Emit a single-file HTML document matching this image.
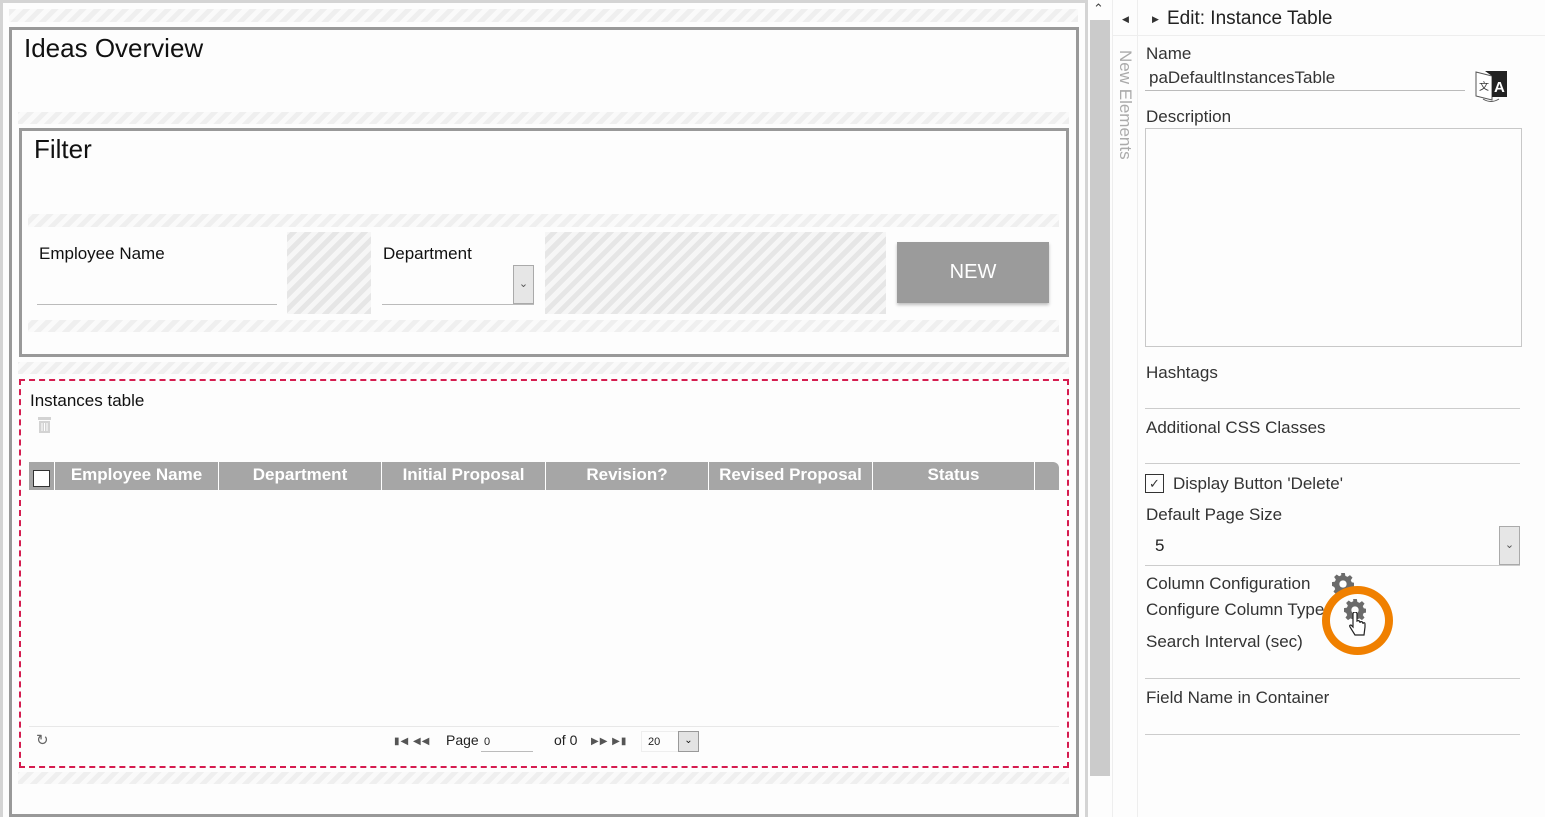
<!DOCTYPE html>
<html><head><meta charset="utf-8"><style>
*{margin:0;padding:0;box-sizing:border-box}
body{width:1545px;height:817px;overflow:hidden;background:#fdfdfd;font-family:"Liberation Sans",Roboto,sans-serif;position:relative;color:#111}
.a{position:absolute}
.st{position:absolute;background:repeating-linear-gradient(-45deg,#efefef 0 5px,#fafafa 5px 10px)}
.sd{position:absolute;background:repeating-linear-gradient(-45deg,#e6e6e6 0 5px,#f6f6f6 5px 10px)}
.lbl{position:absolute;font-size:17px;color:#333;white-space:nowrap}
.ul{position:absolute;height:1px;background:#bbb}
.th{position:absolute;top:462px;height:28px;color:#fff;font-weight:bold;font-size:17px;text-align:center;line-height:26px;border-right:1px solid #fff}
</style></head><body>
<svg width="0" height="0" style="position:absolute"><defs><g id="gear"><path d="M10 0h4l.6 3.2 2.3 1 2.7-1.9 2.8 2.8-1.9 2.7 1 2.3 3.2.6v4l-3.2.6-1 2.3 1.9 2.7-2.8 2.8-2.7-1.9-2.3 1-.6 3.2h-4l-.6-3.2-2.3-1-2.7 1.9-2.8-2.8 1.9-2.7-1-2.3L0 14v-4l3.2-.6 1-2.3-1.9-2.7 2.8-2.8 2.7 1.9 2.3-1z" fill="#6b6b6b"/><circle cx="12" cy="12" r="4" fill="#fff"/></g></defs></svg>
<div class="a" style="left:0;top:0;width:1088px;height:3px;background:#d4d4d4"></div>
<div class="a" style="left:0;top:0;width:3px;height:817px;background:#d4d4d4"></div>
<div class="a" style="left:1085px;top:0;width:3px;height:817px;background:#d4d4d4"></div>
<div class="st" style="left:9px;top:9px;width:1069px;height:13px"></div>
<div class="a" style="left:9px;top:27px;width:1070px;height:790px;border:3px solid #999"></div>
<div class="a" style="left:24px;top:33px;font-size:26px">Ideas Overview</div>
<div class="st" style="left:18px;top:112px;width:1051px;height:12px"></div>
<div class="a" style="left:19px;top:128px;width:1050px;height:229px;border:3px solid #999"></div>
<div class="a" style="left:34px;top:134px;font-size:26px">Filter</div>
<div class="st" style="left:28px;top:214px;width:1031px;height:13px"></div>
<div class="a" style="left:39px;top:244px;font-size:17px">Employee Name</div>
<div class="ul" style="left:37px;top:304px;width:240px"></div>
<div class="sd" style="left:287px;top:232px;width:84px;height:82px"></div>
<div class="a" style="left:383px;top:244px;font-size:17px">Department</div>
<div class="ul" style="left:382px;top:304px;width:152px"></div>
<div class="a" style="left:513px;top:265px;width:21px;height:39px;background:#e6e6e6;border:1px solid #aaa;font-size:11px;text-align:center;line-height:36px;color:#555">&#8964;</div>
<div class="sd" style="left:545px;top:232px;width:341px;height:82px"></div>
<div class="a" style="left:897px;top:242px;width:152px;height:61px;background:#9b9b9b;color:#fff;font-size:20px;text-align:center;line-height:61px;box-shadow:0 2px 3px rgba(0,0,0,.25)">NEW</div>
<div class="st" style="left:28px;top:320px;width:1031px;height:12px"></div>
<div class="st" style="left:18px;top:362px;width:1051px;height:12px"></div>
<div class="a" style="left:19px;top:379px;width:1050px;height:389px;border:2px dashed #d51c4f"></div>
<div class="a" style="left:30px;top:391px;font-size:17px">Instances table</div>
<svg class="a" style="left:36px;top:416px" width="17" height="18" viewBox="0 0 17 18"><rect x="2" y="1" width="13" height="3" fill="#d3d3d3"/><rect x="3" y="5" width="11" height="12" fill="#d3d3d3"/><path d="M6 7v8M8.5 7v8M11 7v8" stroke="#fff"/></svg>
<div class="a" style="left:29px;top:462px;width:1030px;height:28px;background:#a6a6a6;border-top-right-radius:6px"></div>
<div class="a" style="left:33px;top:470px;width:17px;height:17px;background:#fff;border:1px solid #333"></div>
<div class="a" style="left:54px;top:462px;width:1px;height:28px;background:#fff"></div>
<div class="th" style="left:55px;width:164px">Employee Name</div>
<div class="th" style="left:219px;width:163px">Department</div>
<div class="th" style="left:382px;width:164px">Initial Proposal</div>
<div class="th" style="left:546px;width:163px">Revision?</div>
<div class="th" style="left:709px;width:164px">Revised Proposal</div>
<div class="th" style="left:873px;width:162px">Status</div>
<div class="a" style="left:29px;top:726px;width:1030px;height:1px;background:#e8e8e8"></div>
<div class="a" style="left:36px;top:731px;font-size:15px;color:#666">&#x21BB;</div>
<div class="a" style="left:394px;top:736px;font-size:10px;color:#555;letter-spacing:1px">&#9646;&#9664; &#9664;&#9664;</div>
<div class="a" style="left:446px;top:732px;font-size:14px;color:#222">Page</div>
<div class="a" style="left:484px;top:736px;font-size:11px;color:#222">0</div>
<div class="ul" style="left:481px;top:751px;width:52px"></div>
<div class="a" style="left:554px;top:732px;font-size:14px;color:#222">of 0</div>
<div class="a" style="left:591px;top:736px;font-size:10px;color:#555;letter-spacing:1px">&#9654;&#9654; &#9654;&#9646;</div>
<div class="a" style="left:641px;top:731px;width:58px;height:21px;border:1px solid #eee;font-size:11px;color:#222;padding:4px 6px">20</div>
<div class="a" style="left:678px;top:731px;width:21px;height:21px;background:#e3e3e3;border:1px solid #999;font-size:10px;text-align:center;line-height:17px">&#8964;</div>
<div class="st" style="left:18px;top:772px;width:1051px;height:12px"></div>
<div class="a" style="left:1090px;top:20px;width:20px;height:756px;background:#cbcbcb"></div>
<div class="a" style="left:1093px;top:1px;font-size:13px;color:#444">&#8963;</div>
<div class="a" style="left:1112px;top:0;width:1px;height:817px;background:#eee"></div>
<div class="a" style="left:1137px;top:0;width:1px;height:817px;background:#eee"></div>
<div class="a" style="left:1112px;top:35px;width:433px;height:1px;background:#eee"></div>
<div class="a" style="left:1122px;top:14px;font-size:9px;color:#333">&#9664;</div>
<div class="a" style="left:1115px;top:50px;writing-mode:vertical-rl;font-size:17px;color:#aaa">New Elements</div>
<div class="a" style="left:1152px;top:14px;font-size:9px;color:#333">&#9654;</div>
<div class="a" style="left:1167px;top:8px;font-size:19px;color:#222">Edit: Instance Table</div>
<div class="lbl" style="left:1146px;top:44px">Name</div>
<div class="lbl" style="left:1149px;top:68px">paDefaultInstancesTable</div>
<div class="ul" style="left:1145px;top:90px;width:320px"></div>
<svg class="a" style="left:1475px;top:66px" width="34" height="38" viewBox="0 0 34 38"><path d="M1 6l16 4v24L1 30z" fill="#fff" stroke="#555" stroke-width="1"/><path d="M10 5h22v26H17V10z" fill="#222"/><text x="19" y="26" font-size="15" font-weight="bold" fill="#fff" font-family="Liberation Sans">A</text><text x="4" y="24" font-size="10" fill="#333">文</text><path d="M8 33q8 5 16 0" stroke="#555" fill="none"/></svg>
<div class="lbl" style="left:1146px;top:107px">Description</div>
<div class="a" style="left:1145px;top:128px;width:377px;height:219px;border:1px solid #c8c8c8"></div>
<div class="lbl" style="left:1146px;top:363px">Hashtags</div>
<div class="ul" style="left:1145px;top:408px;width:375px;background:#ccc"></div>
<div class="lbl" style="left:1146px;top:418px">Additional CSS Classes</div>
<div class="ul" style="left:1145px;top:463px;width:375px;background:#ccc"></div>
<div class="a" style="left:1145px;top:474px;width:19px;height:19px;border:1px solid #333;font-size:13px;text-align:center;line-height:17px;color:#333">&#10003;</div>
<div class="lbl" style="left:1173px;top:474px">Display Button 'Delete'</div>
<div class="lbl" style="left:1146px;top:505px">Default Page Size</div>
<div class="lbl" style="left:1155px;top:536px;color:#222">5</div>
<div class="a" style="left:1499px;top:526px;width:21px;height:39px;background:#e6e6e6;border:1px solid #aaa;font-size:11px;text-align:center;line-height:36px;color:#555">&#8964;</div>
<div class="ul" style="left:1145px;top:565px;width:375px;background:#ccc"></div>
<div class="lbl" style="left:1146px;top:574px">Column Configuration</div>
<svg class="a" style="left:1332px;top:573px" width="22" height="22" viewBox="0 0 24 24"><use href="#gear"/></svg>
<div class="lbl" style="left:1146px;top:600px">Configure Column Type</div>
<div class="lbl" style="left:1146px;top:632px">Search Interval (sec)</div>
<div class="a" style="left:1322px;top:586px;width:71px;height:69px;border-radius:50%;border:8px solid #f08000;background:#fdfdfd"></div>
<svg class="a" style="left:1344px;top:599px" width="22" height="22" viewBox="0 0 24 24"><use href="#gear"/></svg>
<svg class="a" style="left:1348px;top:612px" width="20" height="26" viewBox="0 0 20 26"><path d="M5 2v13l-2-2q-2 0-1 2l5 8h9l1-8v-3q0-2-2-1v1-1q-1-2-3-1v1-1q-1-2-3-1V2q0-2-2-2t-2 2z" fill="#fff" stroke="#222" stroke-width="1.2"/></svg>
<div class="ul" style="left:1145px;top:678px;width:375px;background:#ccc"></div>
<div class="lbl" style="left:1146px;top:688px">Field Name in Container</div>
<div class="ul" style="left:1145px;top:734px;width:375px;background:#ccc"></div>
</body></html>
